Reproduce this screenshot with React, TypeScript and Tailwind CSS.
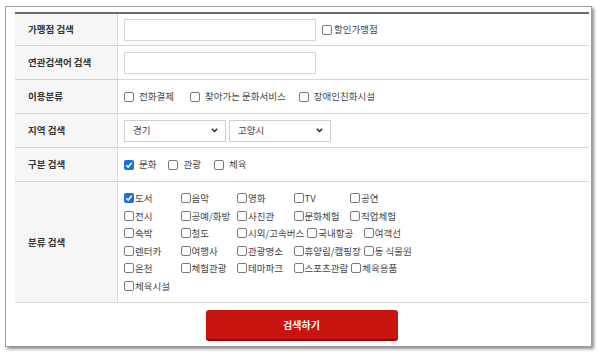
import React from "react";

const font = { fontFamily: '"Noto Sans CJK KR", "Noto Sans", sans-serif' };

function Box({ checked = false }: { checked?: boolean }) {
  if (checked) {
    return (
      <span className="inline-flex w-[10px] h-[10px] shrink-0 items-center justify-center rounded-[2px] bg-[#1a6fe0]">
        <svg width="8" height="8" viewBox="0 0 8 8">
          <path d="M1.2 4.2 L3.2 6.1 L6.8 1.8" fill="none" stroke="white" strokeWidth="1.5" />
        </svg>
      </span>
    );
  }
  return <span className="inline-block w-[10px] h-[10px] shrink-0 rounded-[2px] border border-[#7a7a7a] bg-white" />;
}

function Row({ label, children, h = "h-[34px]", top = false }: { label: string; children: React.ReactNode; h?: string; top?: boolean }) {
  return (
    <div className={`flex ${h} border-b border-[#d4d4d4] ${top ? "border-t-2 border-t-[#6a6a6a]" : ""}`}>
      <div className="w-[103px] shrink-0 bg-[#f6f6f6] border-r border-[#dcdcdc] flex items-center pl-[13px] text-[9.5px] font-bold text-[#333]">
        {label}
      </div>
      <div className="flex-1 flex items-center pl-[6px]">{children}</div>
    </div>
  );
}

function Select({ value }: { value: string }) {
  return (
    <div className="w-[102px] h-[22px] border border-[#cfcfcf] bg-white flex items-center justify-between pl-[8px] pr-[7px] text-[9.5px] text-[#444]">
      <span>{value}</span>
      <svg width="7" height="5" viewBox="0 0 7 5">
        <path d="M0.8 0.8 L3.5 3.6 L6.2 0.8" fill="none" stroke="#222" strokeWidth="1.4" />
      </svg>
    </div>
  );
}

const cats = [
  ["도서", true], ["음악"], ["영화"], ["TV"], ["공연"],
  ["전시"], ["공예/화방"], ["사진관"], ["문화체험"], ["직업체험"],
  ["숙박"], ["철도"], ["시외/고속버스"], ["국내항공"], ["여객선"],
  ["렌터카"], ["여행사"], ["관광명소"], ["휴양림/캠핑장"], ["동 식물원"],
  ["온천"], ["체험관광"], ["테마파크"], ["스포츠관람"], ["체육용품"],
  ["체육시설"],
] as [string, boolean?][];

export default function App() {
  return (
    <div className="w-[600px] h-[354px] bg-white pt-[6px] pl-[5px]" style={font}>
      <div className="w-[587px] h-[341px] bg-white border border-[#9c9c9c] shadow-[2px_2px_3px_rgba(0,0,0,0.45)] pl-[9px] pr-[1px] pt-[5px]">
        <div className="w-[574px]">
          <Row label="가맹점 검색" top>
            <div className="w-[192px] h-[22px] border border-[#d6d6d6] bg-white" />
            <label className="flex items-center gap-[2px] ml-[6px] text-[9.5px] text-[#444]">
              <Box />
              <span>할인가맹점</span>
            </label>
          </Row>
          <Row label="연관검색어 검색">
            <div className="w-[192px] h-[22px] border border-[#d6d6d6] bg-white" />
          </Row>
          <Row label="이용분류">
            <div className="flex items-center text-[9.5px] text-[#444]">
              <Box />
              <span className="ml-[5px] mr-[16px]">전화결제</span>
              <Box />
              <span className="ml-[5px] mr-[13px]">찾아가는 문화서비스</span>
              <Box />
              <span className="ml-[5px]">장애인친화시설</span>
            </div>
          </Row>
          <Row label="지역 검색">
            <div className="flex gap-[3px]">
              <Select value="경기" />
              <Select value="고양시" />
            </div>
          </Row>
          <Row label="구분 검색">
            <div className="flex items-center text-[9.5px] text-[#444]">
              <Box checked />
              <span className="ml-[5px] mr-[12px]">문화</span>
              <Box />
              <span className="ml-[5px] mr-[13px]">관광</span>
              <Box />
              <span className="ml-[5px]">체육</span>
            </div>
          </Row>
          <Row label="분류 검색" h="h-[121px]">
            <div className="flex flex-wrap w-[310px] text-[9.5px] text-[#444]">
              {cats.map(([name, c]) => (
                <div key={name} className="min-w-[56.5px] h-[17.5px] flex items-center gap-[1px] pr-[3px]">
                  <Box checked={!!c} />
                  <span>{name}</span>
                </div>
              ))}
            </div>
          </Row>
        </div>
        <div className="flex justify-center pt-[7px] pr-[2px]">
          <button className="w-[192px] h-[31px] rounded-[3px] bg-[#c8140f] border-b-2 border-[#8e0d0a] text-white text-[10px] font-bold">
            검색하기
          </button>
        </div>
      </div>
    </div>
  );
}
